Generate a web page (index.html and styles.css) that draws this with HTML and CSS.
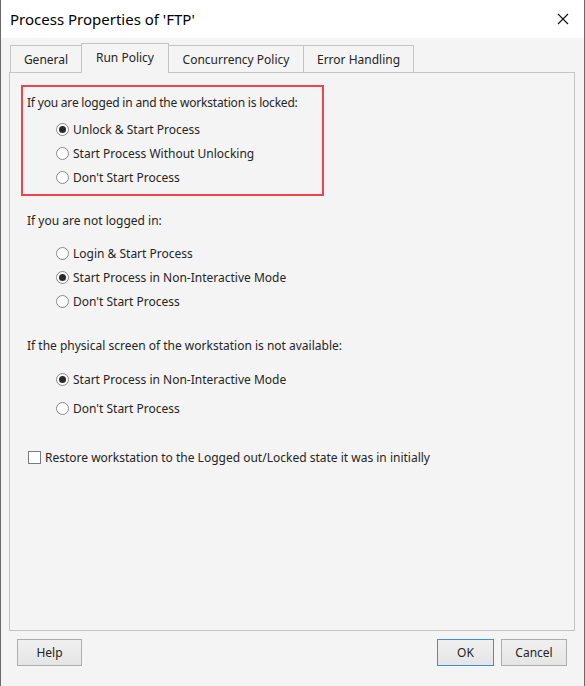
FILE: index.html
```html
<!DOCTYPE html>
<html>
<head>
<meta charset="utf-8">
<link rel="stylesheet" href="styles.css">
</head>
<body>
<div class="window">
  <div class="titlebar">
    <span class="title">Process Properties of 'FTP'</span>
    <svg class="close" width="12" height="12" viewBox="0 0 12 12"><path d="M1 1L11 11M11 1L1 11" stroke="#111" stroke-width="1.1" fill="none"/></svg>
  </div>
  <div class="content">
    <div class="tabs">
      <div class="tab tab-general">General</div>
      <div class="tab tab-run active">Run Policy</div>
      <div class="tab tab-conc">Concurrency Policy</div>
      <div class="tab tab-err">Error Handling</div>
    </div>
    <div class="panel">
      <div class="group highlight">
        <div class="heading">If you are logged in and the workstation is locked:</div>
        <div class="options first-tight">
          <div class="opt"><span class="radio checked"></span>Unlock &amp; Start Process</div>
          <div class="opt"><span class="radio"></span>Start Process Without Unlocking</div>
          <div class="opt"><span class="radio"></span>Don't Start Process</div>
        </div>
      </div>
      <div class="group g2">
        <div class="heading">If you are not logged in:</div>
        <div class="options">
          <div class="opt"><span class="radio"></span>Login &amp; Start Process</div>
          <div class="opt"><span class="radio checked"></span>Start Process in Non-Interactive Mode</div>
          <div class="opt"><span class="radio"></span>Don't Start Process</div>
        </div>
      </div>
      <div class="group g3">
        <div class="heading">If the physical screen of the workstation is not available:</div>
        <div class="options wide">
          <div class="opt"><span class="radio checked"></span>Start Process in Non-Interactive Mode</div>
          <div class="opt"><span class="radio"></span>Don't Start Process</div>
        </div>
      </div>
      <div class="check-row"><span class="checkbox"></span>Restore workstation to the Logged out/Locked state it was in initially</div>
    </div>
    <div class="footer">
      <button class="btn btn-help">Help</button>
      <div class="spacer"></div>
      <button class="btn btn-ok">OK</button>
      <button class="btn btn-cancel">Cancel</button>
    </div>
  </div>
</div>
</body>
</html>
```
FILE: styles.css
```css
html, body {
  margin: 0;
  padding: 0;
  background: #f4f4f4;
}
.window {
  width: 585px;
  height: 686px;
  box-sizing: border-box;
  border-left: 1px solid #6a6a6a;
  border-right: 1px solid #6a6a6a;
  background: #f4f4f4;
  display: flex;
  flex-direction: column;
  font-family: "Noto Sans", "Open Sans", sans-serif;
  font-size: 12px;
  color: #252525;
}
.titlebar {
  height: 38px;
  flex: none;
  background: #fff;
  display: flex;
  align-items: center;
  padding-left: 9px;
  padding-right: 15px;
}
.title {
  font-size: 15px;
  color: #000;
  flex: 1;
  margin-top: -1px;
}
.close {
  display: block;
}
.content {
  flex: 1;
  display: flex;
  flex-direction: column;
  padding: 5px 9px 0 8px;
}
.tabs {
  display: flex;
  align-items: flex-end;
  height: 29px;
  padding-left: 1px;
}
.tab {
  box-sizing: border-box;
  height: 27px;
  border: 1px solid #c4c4c4;
  border-bottom: none;
  margin-left: -1px;
  display: flex;
  align-items: center;
  justify-content: center;
  background: #f4f4f4;
  color: #252525;
  padding-top: 1px;
}
.tab:first-child { margin-left: 0; }
.tab.active {
  height: 30px;
  margin-bottom: -1px;
  position: relative;
  z-index: 1;
  padding-bottom: 3px;
}
.tab-general { width: 72px; }
.tab-run { width: 88px; }
.tab-conc { width: 136px; }
.tab-err { width: 111px; }
.panel {
  box-sizing: border-box;
  height: 559px;
  border: 1px solid #c4c4c4;
  padding: 12px 0 0 11px;
  display: flex;
  flex-direction: column;
  align-items: flex-start;
}
.group {
  display: flex;
  flex-direction: column;
}
.highlight {
  box-sizing: border-box;
  width: 303px;
  height: 111px;
  border: 2px solid #ec454c;
  padding: 8px 0 0 4px;
}
.highlight .heading {
  letter-spacing: -0.2px;
}
.heading {
  line-height: 16px;
  height: 16px;
}
.options {
  display: flex;
  flex-direction: column;
  margin-top: 12px;
  padding-left: 29px;
}
.options.first-tight {
  margin-top: 6px;
}
.opt {
  height: 24px;
  display: flex;
  align-items: center;
}
.options.wide {
  margin-top: 13px;
}
.options.wide .opt + .opt {
  margin-top: 5px;
}
.radio {
  box-sizing: border-box;
  width: 13px;
  height: 13px;
  border: 1px solid #8a8a8a;
  border-radius: 50%;
  background: #fff;
  margin-right: 4px;
  display: flex;
  align-items: center;
  justify-content: center;
  flex: none;
}
.radio.checked::after {
  content: "";
  width: 7px;
  height: 7px;
  border-radius: 50%;
  background: #2a2a2a;
}
.g2 {
  margin-top: 17px;
  padding-left: 6px;
}
.g3 {
  margin-top: 25px;
  padding-left: 6px;
}
.check-row {
  margin-top: 25px;
  margin-left: 7px;
  height: 24px;
  display: flex;
  align-items: center;
}
.checkbox {
  box-sizing: border-box;
  width: 13px;
  height: 13px;
  border: 1px solid #7a7a7a;
  background: #fff;
  margin-right: 4px;
  flex: none;
}
.footer {
  display: flex;
  align-items: center;
  margin-top: 8px;
  padding: 0 0 0 8px;
}
.spacer { flex: 1; }
.btn {
  box-sizing: border-box;
  height: 27px;
  border: 1px solid #adadad;
  background: linear-gradient(#f0f0f0, #e5e5e5);
  font-family: "Noto Sans", "Open Sans", sans-serif;
  font-size: 12px;
  color: #252525;
  padding: 0;
  margin: 0;
}
.btn-help { width: 65px; }
.btn-ok {
  width: 57px;
  border-color: #3c8de4;
  margin-right: 7px;
}
.btn-cancel {
  width: 66px;
  margin-right: 8px;
}
```
